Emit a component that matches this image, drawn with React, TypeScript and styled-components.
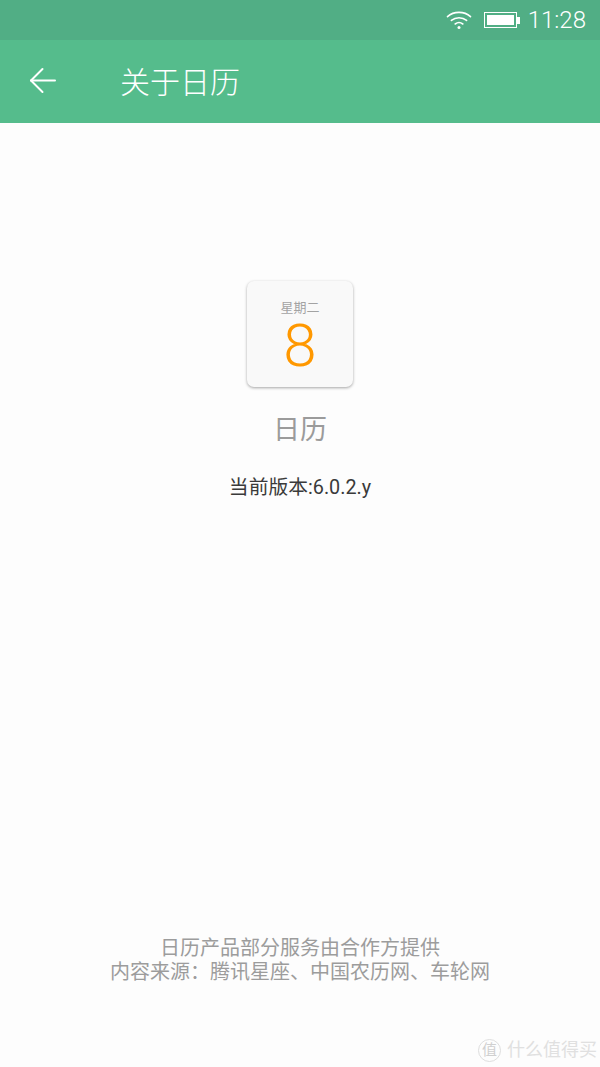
import styled, { createGlobalStyle } from 'styled-components'

const cjk = `Roboto, "Noto Sans CJK SC", sans-serif`

const GlobalStyle = createGlobalStyle`
  html, body {
    margin: 0;
    padding: 0;
    background: #fdfdfd;
    font-family: ${cjk};
  }
`

const App = () => {
  return (
    <>
      <GlobalStyle />
      <Page>
        <StatusBar>
          <svg width="26" height="20" viewBox="0 0 26 20" fill="none" stroke="#fff" strokeWidth="1.6" strokeLinecap="round">
            <path d="M1.5 6.6C7.8 1 18.2 1 24.5 6.6" />
            <path d="M5.4 10.4C9.6 6.8 16.4 6.8 20.6 10.4" />
            <path d="M9.2 14C11.4 12.3 14.6 12.3 16.8 14" />
            <circle cx="13" cy="17.4" r="1.5" fill="#fff" stroke="none" />
          </svg>
          <Battery>
            <BatteryFill />
            <BatteryTip />
          </Battery>
          <Clock>11:28</Clock>
        </StatusBar>
        <Toolbar>
          <svg width="28" height="27" viewBox="0 0 28 27" fill="none" stroke="#fff" strokeWidth="2" strokeLinecap="round" strokeLinejoin="round">
            <path d="M2 13.5H26" />
            <path d="M13.5 2L2 13.5L13.5 25" />
          </svg>
          <Title>关于日历</Title>
        </Toolbar>
        <Content>
          <AppIcon>
            <Weekday>星期二</Weekday>
            <DayNumber>8</DayNumber>
          </AppIcon>
          <AppName>日历</AppName>
          <Version>当前版本:6.0.2.y</Version>
        </Content>
        <Footer>
          <FooterLine>日历产品部分服务由合作方提供</FooterLine>
          <FooterLine>内容来源：腾讯星座、中国农历网、车轮网</FooterLine>
        </Footer>
        <Watermark>
          <WatermarkBadge>值</WatermarkBadge>
          什么值得买
        </Watermark>
      </Page>
    </>
  )
}

const Page = styled.div`
  position: relative;
  width: 600px;
  height: 1067px;
  display: flex;
  flex-direction: column;
  overflow: hidden;
  background: #fdfdfd;
`

const StatusBar = styled.div`
  height: 40px;
  background: #51ae85;
  display: flex;
  align-items: center;
  justify-content: flex-end;
  padding-right: 14px;
  box-sizing: border-box;
`

const Battery = styled.div`
  position: relative;
  width: 33px;
  height: 16px;
  margin: 0 11px 0 12px;
  border: 1px solid #fff;
  box-sizing: border-box;
  padding: 2px;
`

const BatteryFill = styled.div`
  width: 100%;
  height: 100%;
  background: #fff;
`

const BatteryTip = styled.div`
  position: absolute;
  right: -4px;
  top: 4px;
  width: 3px;
  height: 7px;
  background: #fff;
`

const Clock = styled.div`
  color: #fff;
  font-size: 24px;
  font-weight: 300;
  line-height: 40px;
`

const Toolbar = styled.div`
  height: 83px;
  background: #55bc8c;
  display: flex;
  align-items: center;
  padding: 0 0 2px 29px;
  gap: 63px;
  box-sizing: border-box;
`

const Title = styled.div`
  color: #fff;
  font-size: 30px;
  font-weight: 300;
  padding-bottom: 2px;
`

const Content = styled.div`
  display: flex;
  flex-direction: column;
  align-items: center;
  padding-top: 158px;
`

const AppIcon = styled.div`
  width: 106px;
  height: 106px;
  border-radius: 7px;
  background: #f9f9f9;
  box-shadow: 0 1px 3px rgba(0, 0, 0, 0.35);
  display: flex;
  flex-direction: column;
  align-items: center;
  padding-top: 19px;
  box-sizing: border-box;
`

const Weekday = styled.div`
  color: #a3a3a3;
  font-size: 13px;
  line-height: 16px;
`

const DayNumber = styled.div`
  color: #ff9800;
  font-family: Roboto, sans-serif;
  font-weight: 300;
  font-size: 60px;
  line-height: 60px;
`

const AppName = styled.div`
  color: #9b9b9b;
  font-size: 27px;
  line-height: 40px;
  margin-top: 23px;
`

const Version = styled.div`
  color: #3a3a3a;
  font-size: 19.8px;
  line-height: 28px;
  margin-top: 24px;
`

const Footer = styled.div`
  margin-top: auto;
  margin-bottom: 83px;
  display: flex;
  flex-direction: column;
  align-items: center;
`

const FooterLine = styled.div`
  color: #9c9c9c;
  font-size: 20px;
  line-height: 24px;
`

const Watermark = styled.div`
  position: absolute;
  right: 3px;
  bottom: 5px;
  display: flex;
  align-items: center;
  gap: 6px;
  color: #e0e0e0;
  font-size: 18px;
  line-height: 24px;
`

const WatermarkBadge = styled.div`
  width: 21px;
  height: 21px;
  border: 1px solid #dedede;
  border-radius: 50%;
  color: #d0d0d0;
  font-size: 15px;
  line-height: 21px;
  text-align: center;
`

export default App
